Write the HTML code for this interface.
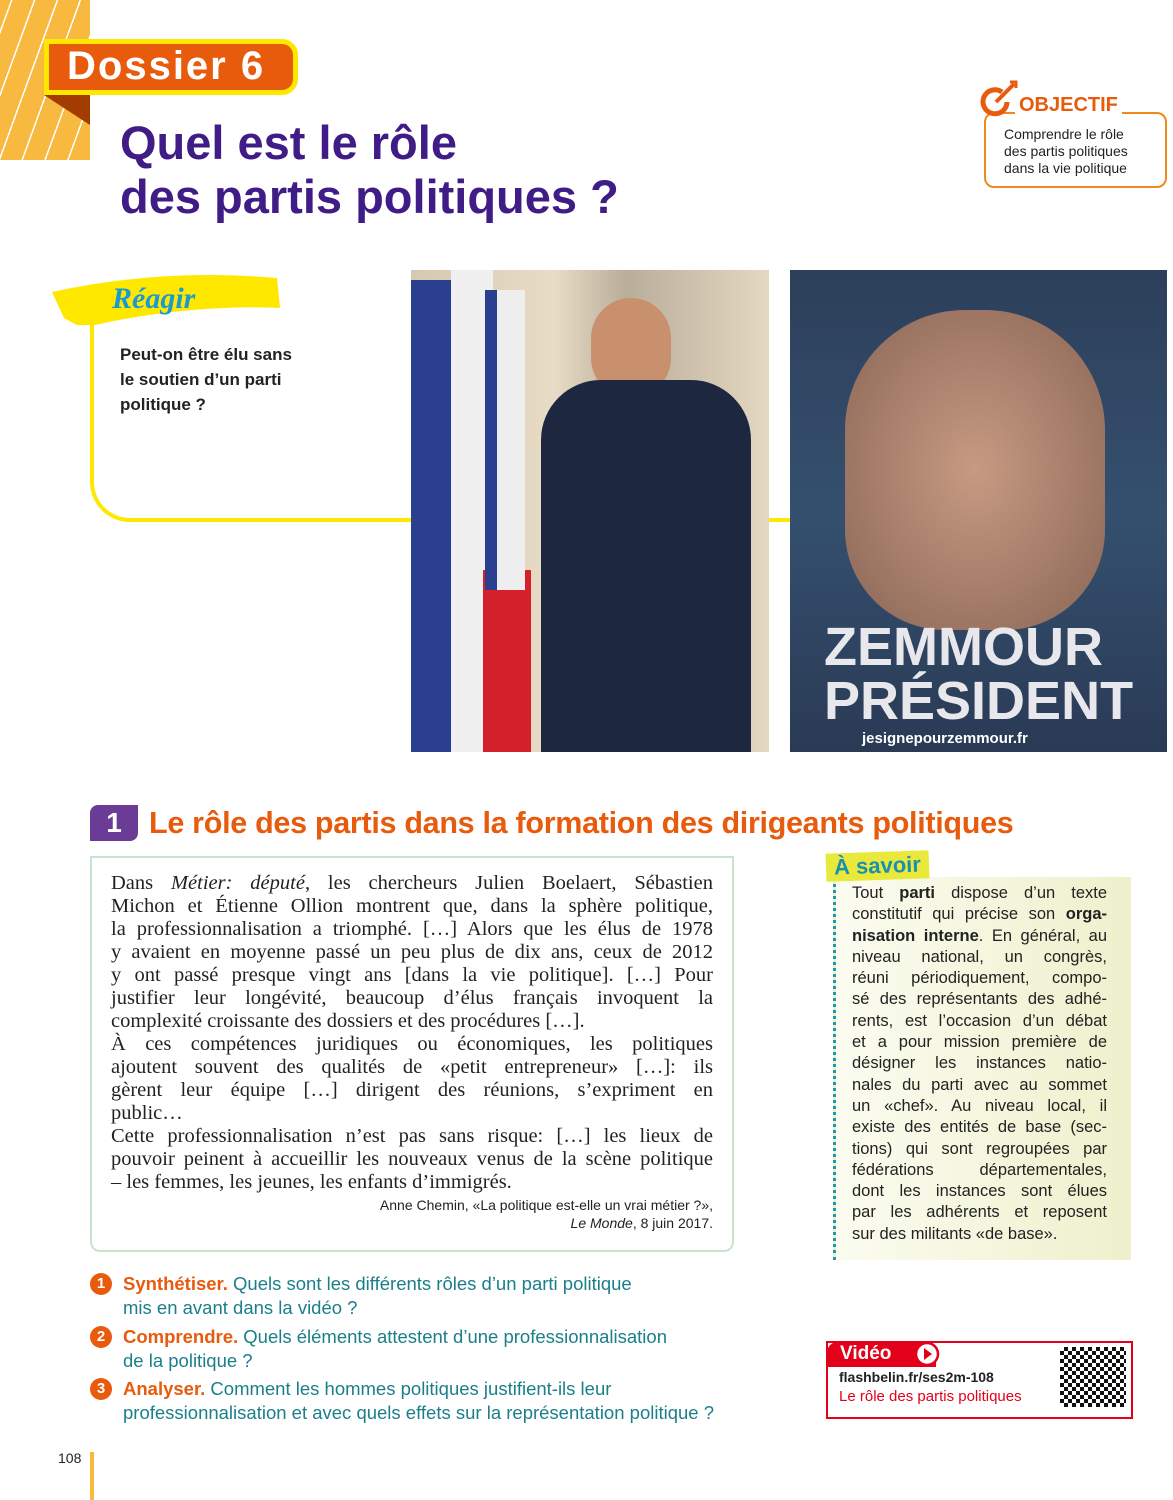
<!DOCTYPE html>
<html><head><meta charset="utf-8"><style>
*{margin:0;padding:0;box-sizing:border-box}
body{width:1173px;height:1500px;background:#fff;position:relative;font-family:"Liberation Sans",sans-serif;overflow:hidden}
.abs{position:absolute}
.stripes{left:0;top:0;width:90px;height:160px;background:repeating-linear-gradient(-70deg,#f7b940 0 20px,#fff 20px 21.5px)}
.dossier{left:44px;top:39px;width:254px;height:56px;background:#e85a0c;border:5px solid #ffe800;border-radius:0 16px 16px 0;color:#fff;font-weight:bold;font-size:40px;letter-spacing:2px;line-height:44px;padding-left:18px}
.fold{left:44px;top:95px;width:0;height:0;border-right:46px solid #a23c00;border-bottom:30px solid transparent}
h1{position:absolute;left:120px;top:116px;color:#3f1c86;font-size:47px;line-height:54px;font-weight:bold}
.obj{left:984px;top:112px;width:183px;height:76px;border:2px solid #f08a1c;border-radius:10px;font-size:14px;line-height:17px;padding:12px 0 0 18px;color:#222}
.objt{left:1015px;top:94px;color:#e85a0c;font-weight:bold;font-size:20px;background:#fff;padding:0 4px}
.reagir{left:52px;top:270px;width:230px;height:55px}
.rbox{left:90px;top:320px;width:321px;height:202px;border-left:4px solid #ffe800;border-bottom:4px solid #ffe800;border-radius:0 0 0 40px}
.rq{left:120px;top:342px;font-weight:bold;font-size:17px;line-height:25px;color:#222}
.ph1{left:411px;top:270px;width:358px;height:482px;background:linear-gradient(90deg,#d7c8b0,#e8dcc6 40%,#b9ae9a 60%,#e4d8c2);overflow:hidden}
.ph2{left:790px;top:270px;width:377px;height:482px;background:linear-gradient(180deg,#2d3f5a,#34506f 50%,#2a3a55);overflow:hidden}
.sec{left:90px;top:805px;width:48px;height:36px;background:#6a3c96;border-radius:8px 0 8px 0;color:#fff;font-weight:bold;font-size:28px;text-align:center;line-height:36px}
.sect{left:149px;top:805px;color:#e85a0c;font-weight:bold;font-size:30.5px;line-height:36px;letter-spacing:-.3px}
.doc{left:90px;top:856px;width:644px;height:396px;border:2px solid #c7e4cf;border-radius:0 0 10px 10px;padding:14px 19px;font-family:"Liberation Serif",serif;font-size:20.5px;line-height:23px;color:#222}
.l{text-align:justify;text-align-last:justify;height:23px;white-space:nowrap}
.src{font-family:"Liberation Sans",sans-serif;font-size:14px;line-height:18px;text-align:right;margin-top:2px}
.sav{left:833px;top:877px;width:298px;height:383px;background:linear-gradient(90deg,#fbfcf0,#eef0cc);border-left:3px dotted #1a9ab0;padding:6px 24px 0 16px;font-size:16.5px;line-height:21.3px;color:#222}
.sav .l{height:21.3px}
.savt{left:826px;top:852px;background:#e8e93a;color:#1a90b0;font-weight:bold;font-size:22px;line-height:28px;padding:0 8px;transform:rotate(-2deg)}
.q{left:90px;font-size:18.5px;line-height:24px;color:#1b7f8a}
.q b{color:#e85a0c}
.n{position:absolute;left:0;top:1px;width:22px;height:22px;border-radius:50%;background:#e85a0c;color:#fff;font-size:15px;font-weight:bold;text-align:center;line-height:22px}
.q div{padding-left:33px}
.vid{left:826px;top:1341px;width:307px;height:78px;border:2px solid #e3001b}
.vidt{left:826px;top:1341px;width:110px;height:26px;background:#e3001b;border-radius:14px 14px 0 0;color:#fff;font-weight:bold;font-size:19px;padding-left:14px;line-height:26px}
</style></head><body>
<div class="abs stripes"></div>
<div class="abs fold"></div>
<div class="abs dossier">Dossier 6</div>
<h1>Quel est le rôle<br>des partis politiques ?</h1>
<div class="abs obj">Comprendre le rôle<br>des partis politiques<br>dans la vie politique</div>
<svg class="abs" style="left:980px;top:78px" width="40" height="40" viewBox="0 0 40 40"><path d="M22 14a12 12 0 1 0 5 10" stroke="#e85a0c" stroke-width="5" fill="none"/><path d="M16 24L34 6" stroke="#e85a0c" stroke-width="4"/><path d="M30 4l6 0 0 6" stroke="#e85a0c" stroke-width="3" fill="none"/></svg>
<div class="abs objt">OBJECTIF</div>
<svg class="abs reagir" viewBox="0 0 230 55"><path d="M0 22Q110 -2 225 8L228 38Q130 34 30 58L12 48Z" fill="#ffe800"/><text x="60" y="38" fill="#1a9ad0" font-family="Liberation Serif" font-style="italic" font-weight="bold" font-size="30">Réagir</text></svg>
<div class="abs rbox"></div>
<div class="abs" style="left:769px;top:518px;width:21px;height:4px;background:#ffe800"></div>
<div class="abs rq">Peut-on être élu sans<br>le soutien d’un parti<br>politique ?</div>
<div class="abs ph1">
<div class="abs" style="left:0;top:10px;width:50px;height:472px;background:#2a3f8f"></div>
<div class="abs" style="left:40px;top:0;width:42px;height:482px;background:#f0f0f0"></div>
<div class="abs" style="left:72px;top:300px;width:48px;height:182px;background:#d4202a"></div>
<div class="abs" style="left:74px;top:20px;width:40px;height:300px;background:linear-gradient(90deg,#2a3f8f 0 30%,#eee 30%)"></div>
<div class="abs" style="left:180px;top:28px;width:80px;height:100px;border-radius:40px;background:#c9906e"></div>
<div class="abs" style="left:130px;top:110px;width:210px;height:372px;border-radius:60px 60px 0 0;background:#1e2740"></div>
</div>
<div class="abs ph2">
<div class="abs" style="left:55px;top:40px;width:260px;height:320px;border-radius:120px 120px 100px 100px;background:radial-gradient(#c79a82,#8a6656)"></div>
<div style="position:absolute;left:34px;top:350px;color:#e8e8ec;font-weight:bold;font-size:54px;line-height:54px">ZEMMOUR<br>PRÉSIDENT</div>
<div style="position:absolute;left:72px;top:460px;color:#fff;font-size:15px;font-weight:bold">jesignepourzemmour.fr</div>
</div>
<div class="abs sec">1</div>
<div class="abs sect">Le rôle des partis dans la formation des dirigeants politiques</div>
<div class="abs doc">
<div class="l">Dans <i>Métier: député</i>, les chercheurs Julien Boelaert, Sébastien</div>
<div class="l">Michon et Étienne Ollion montrent que, dans la sphère politique,</div>
<div class="l">la professionnalisation a triomphé. […] Alors que les élus de 1978</div>
<div class="l">y avaient en moyenne passé un peu plus de dix ans, ceux de 2012</div>
<div class="l">y ont passé presque vingt ans [dans la vie politique]. […] Pour</div>
<div class="l">justifier leur longévité, beaucoup d’élus français invoquent la</div>
<div class="l" style="text-align-last:left">complexité croissante des dossiers et des procédures […].</div>
<div class="l">À ces compétences juridiques ou économiques, les politiques</div>
<div class="l">ajoutent souvent des qualités de «petit entrepreneur» […]: ils</div>
<div class="l">gèrent leur équipe […] dirigent des réunions, s’expriment en</div>
<div class="l" style="text-align-last:left">public…</div>
<div class="l">Cette professionnalisation n’est pas sans risque: […] les lieux de</div>
<div class="l">pouvoir peinent à accueillir les nouveaux venus de la scène politique</div>
<div class="l" style="text-align-last:left">– les femmes, les jeunes, les enfants d’immigrés.</div>
<div class="src">Anne Chemin, «La politique est-elle un vrai métier ?»,<br><i>Le Monde</i>, 8 juin 2017.</div></div>
<div class="abs sav">
<div class="l">Tout <b>parti</b> dispose d’un texte</div>
<div class="l">constitutif qui précise son <b>orga-</b></div>
<div class="l"><b>nisation interne</b>. En général, au</div>
<div class="l">niveau national, un congrès,</div>
<div class="l">réuni périodiquement, compo-</div>
<div class="l">sé des représentants des adhé-</div>
<div class="l">rents, est l’occasion d’un débat</div>
<div class="l">et a pour mission première de</div>
<div class="l">désigner les instances natio-</div>
<div class="l">nales du parti avec au sommet</div>
<div class="l">un «chef». Au niveau local, il</div>
<div class="l">existe des entités de base (sec-</div>
<div class="l">tions) qui sont regroupées par</div>
<div class="l">fédérations départementales,</div>
<div class="l">dont les instances sont élues</div>
<div class="l">par les adhérents et reposent</div>
<div class="l" style="text-align-last:left">sur des militants «de base».</div>
</div>
<div class="abs savt">À savoir</div>
<div class="abs q" style="top:1272px"><span class="n">1</span><div><b>Synthétiser.</b> Quels sont les différents rôles d’un parti politique<br>mis en avant dans la vidéo ?</div></div>
<div class="abs q" style="top:1325px"><span class="n">2</span><div><b>Comprendre.</b> Quels éléments attestent d’une professionnalisation<br>de la politique ?</div></div>
<div class="abs q" style="top:1377px"><span class="n">3</span><div><b>Analyser.</b> Comment les hommes politiques justifient-ils leur<br>professionnalisation et avec quels effets sur la représentation politique ?</div></div>
<div class="abs vid"></div>
<div class="abs vidt">Vidéo</div>
<svg class="abs" style="left:914px;top:1341px" width="26" height="26"><circle cx="13" cy="13" r="11" fill="#fff" stroke="#e3001b" stroke-width="2.5"/><path d="M10 7l8 6-8 6z" fill="#e3001b"/></svg>
<div class="abs" style="left:839px;top:1369px;font-weight:bold;font-size:14px;color:#222">flashbelin.fr/ses2m-108</div>
<div class="abs" style="left:839px;top:1388px;font-size:15px;color:#e3001b">Le rôle des partis politiques</div>
<div class="abs" style="left:1060px;top:1347px;width:66px;height:60px;background:repeating-conic-gradient(#111 0 25%,#fff 0 50%) 0 0/8px 8px"></div>
<div class="abs" style="left:58px;top:1450px;font-size:14px;color:#222">108</div>
<div class="abs" style="left:90px;top:1452px;width:4px;height:48px;background:#f7b940"></div>
</body></html>
